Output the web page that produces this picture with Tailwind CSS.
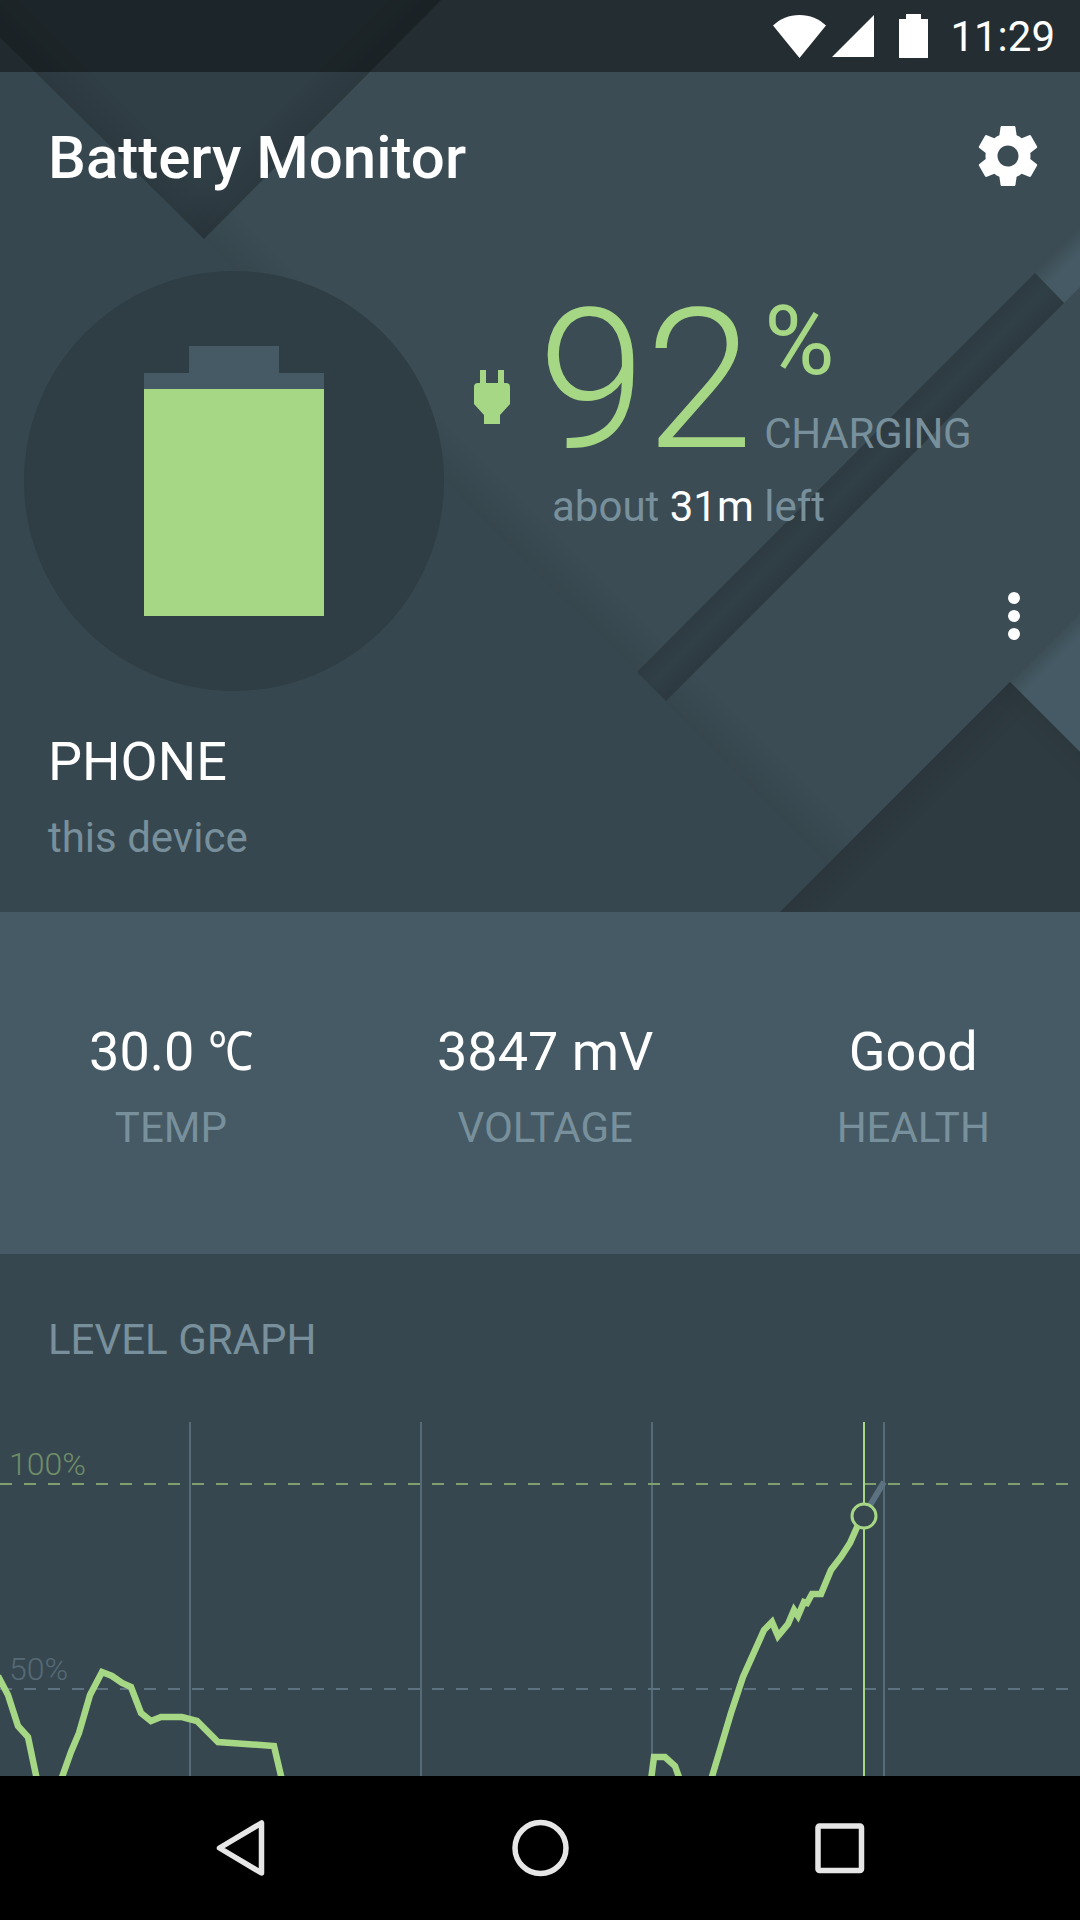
<!DOCTYPE html>
<html>
<head>
<meta charset="utf-8">
<script src="https://cdn.jsdelivr.net/npm/@tailwindcss/browser@4"></script>
</head>
<body class="m-0">
<div class="w-[1080px] h-[1920px] flex flex-col overflow-hidden bg-[#37474f] font-['Roboto',sans-serif] text-white">

  <!-- Hero -->
  <div class="relative h-[912px] flex flex-col shrink-0">
    <svg class="absolute inset-0" width="1080" height="912" viewBox="0 0 1080 912">
      <defs>
        <linearGradient id="mainShadow" gradientUnits="userSpaceOnUse" x1="420" y1="455" x2="450" y2="425"><stop offset="0" stop-color="#000" stop-opacity=".08"/><stop offset="1" stop-color="#000" stop-opacity="0"/></linearGradient>
        <linearGradient id="topL" gradientUnits="userSpaceOnUse" x1="102" y1="138" x2="132" y2="108"><stop offset="0" stop-color="#000" stop-opacity=".09"/><stop offset="1" stop-color="#000" stop-opacity="0"/></linearGradient>
        <linearGradient id="topR" gradientUnits="userSpaceOnUse" x1="322" y1="120" x2="292" y2="90"><stop offset="0" stop-color="#000" stop-opacity=".09"/><stop offset="1" stop-color="#000" stop-opacity="0"/></linearGradient>
        <linearGradient id="bandL" gradientUnits="userSpaceOnUse" x1="836" y1="472" x2="850" y2="486"><stop offset="0" stop-color="#000" stop-opacity=".05"/><stop offset="1" stop-color="#000" stop-opacity="0"/></linearGradient>
        <linearGradient id="bandR" gradientUnits="userSpaceOnUse" x1="865" y1="502" x2="850" y2="487"><stop offset="0" stop-color="#000" stop-opacity=".08"/><stop offset="1" stop-color="#000" stop-opacity="0"/></linearGradient>
        <linearGradient id="triL" gradientUnits="userSpaceOnUse" x1="895" y1="797" x2="922" y2="824"><stop offset="0" stop-color="#000" stop-opacity=".08"/><stop offset="1" stop-color="#000" stop-opacity="0"/></linearGradient>
        <linearGradient id="triR" gradientUnits="userSpaceOnUse" x1="1045" y1="717" x2="1025" y2="737"><stop offset="0" stop-color="#000" stop-opacity=".05"/><stop offset="1" stop-color="#000" stop-opacity="0"/></linearGradient>
        <linearGradient id="stripeA" gradientUnits="userSpaceOnUse" x1="1057" y1="251" x2="1069" y2="263"><stop offset="0" stop-color="#3c4d55"/><stop offset="1" stop-color="#455a64"/></linearGradient>
        <linearGradient id="stripeB" gradientUnits="userSpaceOnUse" x1="1045" y1="647" x2="1057" y2="659"><stop offset="0" stop-color="#3c4d55"/><stop offset="1" stop-color="#455a64"/></linearGradient>
      </defs>
      <rect width="1080" height="912" fill="#37474f"/>
      <polygon points="441,0 1080,0 1080,612 1010,682 828,864 204,239" fill="#3b4c54"/>
      <polygon points="204,239 828,864 870,822 246,197" fill="url(#mainShadow)"/>
      <polygon points="1035,273 1080,228 1080,287 1064,303" fill="url(#stripeA)"/>
      <polygon points="1010,682 1080,612 1080,752" fill="url(#stripeB)"/>
      <polygon points="0,0 441,0 204,239 0,37" fill="#303e45"/>
      <polygon points="0,0 441,0 204,239 0,37" fill="url(#topL)"/>
      <polygon points="0,0 441,0 204,239 0,37" fill="url(#topR)"/>
      <polygon points="637,672 1035,273 1064,303 666,701" fill="#303e45"/>
      <polygon points="637,672 1035,273 1064,303 666,701" fill="url(#bandL)"/>
      <polygon points="637,672 1035,273 1064,303 666,701" fill="url(#bandR)"/>
      <polygon points="1010,682 1080,752 1080,912 780,912" fill="#2e3b41"/>
      <polygon points="1010,682 1080,752 1080,912 780,912" fill="url(#triL)"/>
      <polygon points="1010,682 1080,752 1080,912 780,912" fill="url(#triR)"/>
    </svg>

    <!-- status bar -->
    <div class="relative h-[72px] shrink-0 bg-black/40 flex items-center justify-end pr-[25px]">
      <svg class="mr-[6px]" width="53" height="43" viewBox="0 0 53 43"><path d="M0 10.5C7 4 16 0 26.500 0S46 4 53 10.500L26.500 43z" fill="#fff"/></svg>
      <svg class="mr-[25px]" width="42" height="42" viewBox="0 0 42 42"><path d="M0 42L42 0v42z" fill="#fff"/></svg>
      <svg class="mr-[22px]" width="29" height="44" viewBox="0 0 29 44"><path d="M7 5V0h15v5h7v39H0V5z" fill="#fff"/></svg>
      <span class="text-[42px] leading-none pt-[2px]">11:29</span>
    </div>

    <!-- title -->
    <div class="relative h-[168px] shrink-0 flex items-center justify-between pl-[48px] pr-[36px]">
      <h1 class="text-[60px] leading-none font-medium pt-[3px]">Battery Monitor</h1>
      <svg width="72" height="72" viewBox="0 0 24 24"><path fill="#fff" d="M19.43 12.98c.04-.32.07-.64.07-.98s-.03-.66-.07-.98l2.11-1.65c.19-.15.24-.42.12-.64l-2-3.46c-.12-.22-.39-.3-.61-.22l-2.49 1c-.52-.4-1.08-.73-1.69-.98l-.38-2.65C14.46 2.18 14.25 2 14 2h-4c-.25 0-.46.18-.49.42l-.38 2.65c-.61.25-1.17.59-1.69.98l-2.49-1c-.23-.09-.49 0-.61.22l-2 3.46c-.13.22-.07.49.12.64l2.11 1.65c-.04.32-.07.65-.07.98s.03.66.07.98l-2.11 1.65c-.19.15-.24.42-.12.64l2 3.46c.12.22.39.3.61.22l2.49-1c.52.4 1.08.73 1.69.98l.38 2.65c.03.24.24.42.49.42h4c.25 0 .46-.18.49-.42l.38-2.65c.61-.25 1.17-.59 1.69-.98l2.49 1c.23.09.49 0 .61-.22l2-3.46c.12-.22.07-.49-.12-.64l-2.11-1.65zM12 15.5c-1.93 0-3.5-1.57-3.5-3.5s1.57-3.5 3.5-3.5 3.5 1.57 3.5 3.5-1.57 3.5-3.5 3.5z"/></svg>
    </div>

    <!-- gauge + reading -->
    <div class="relative flex mt-[31px] pl-[24px] h-[420px] shrink-0">
      <div class="w-[420px] h-[420px] rounded-full bg-[#2f3d44] flex flex-col items-center justify-center shrink-0">
        <div class="w-[90px] h-[27px] bg-[#455a64]"></div>
        <div class="w-[180px] h-[16px] bg-[#455a64]"></div>
        <div class="w-[180px] h-[227px] bg-[#a6d785]"></div>
      </div>
      <div class="flex-1 flex flex-col">
        <div class="flex items-start pl-[30px] pt-[15px] h-[191px]">
          <svg class="mt-[84px] shrink-0" width="36" height="54" viewBox="0 0 36 54"><path fill="#a6d785" d="M6 0h6v13h12V0h6v13h2q4 0 4 4V34L26 45V54H10V45L0 34V17q0-4 4-4h2z"/></svg>
          <span class="ml-[28px] text-[194px] leading-[190px] font-light text-[#a6d785]">92</span>
          <div class="flex flex-col ml-[11px]">
            <span class="text-[96px] leading-[96px] text-[#a6d785] mt-[7px]">%</span>
            <span class="text-[42px] leading-[50px] tracking-[-0.3px] text-[#78909c] mt-[20px]">CHARGING</span>
          </div>
        </div>
        <p class="ml-[108px] mt-[20px] text-[42px] leading-[50px] text-[#78909c]">about <span class="text-white">31m</span> left</p>
        <div class="flex flex-col items-end gap-[6px] pr-[60px] mt-[60px]">
          <i class="w-[12px] h-[12px] rounded-full bg-white"></i>
          <i class="w-[12px] h-[12px] rounded-full bg-white"></i>
          <i class="w-[12px] h-[12px] rounded-full bg-white"></i>
        </div>
      </div>
    </div>

    <!-- device -->
    <div class="relative pl-[48px] mt-[37px]">
      <p class="text-[54px] leading-[68px]">PHONE</p>
      <p class="text-[42px] leading-[50px] text-[#78909c] mt-[17px]">this device</p>
    </div>
  </div>

  <!-- Stats -->
  <div class="h-[342px] shrink-0 bg-[#455a64] flex justify-around items-start pt-[110px]">
    <div class="flex flex-col items-center ml-[-2px] mr-[2px]"><span class="text-[54px] leading-[60px] whitespace-nowrap">30.0 <span class="inline-block scale-x-[0.84] origin-left mr-[-9px]">℃</span></span><span class="text-[42px] leading-[50px] text-[#78909c] mt-[21px]">TEMP</span></div>
    <div class="flex flex-col items-center"><span class="text-[54px] leading-[60px]">3847 mV</span><span class="text-[42px] leading-[50px] text-[#78909c] mt-[21px]">VOLTAGE</span></div>
    <div class="flex flex-col items-center ml-[1px] mr-[-1px]"><span class="text-[54px] leading-[60px]">Good</span><span class="text-[42px] leading-[50px] text-[#78909c] mt-[21px]">HEALTH</span></div>
  </div>

  <!-- Graph -->
  <div class="h-[522px] shrink-0 bg-[#37474f] flex flex-col overflow-hidden">
    <p class="text-[42px] leading-[50px] text-[#78909c] pl-[48px] mt-[61px]">LEVEL GRAPH</p>
    <div class="relative mt-[57px] h-[354px]">
      <span class="absolute left-[9px] top-[26px] text-[32px] leading-[32px] font-light text-[#6f8e68]">100%</span>
      <span class="absolute left-[9px] top-[231px] text-[32px] leading-[32px] font-light text-[#566a76]">50%</span>
      <svg class="absolute inset-0" width="1080" height="354" viewBox="0 1422 1080 354" fill="none">
        <path d="M190 1422V1776M421 1422V1776M652 1422V1776M884 1422V1776" stroke="#566b78" stroke-width="2"/>
        <path d="M0 1484H1068" stroke="#7f9f6f" stroke-width="2" stroke-dasharray="12 12"/>
        <path d="M0 1689H1068" stroke="#5d7280" stroke-width="2" stroke-dasharray="12 12"/>
        <path d="M864 1422V1776" stroke="#a6d785" stroke-width="2"/>
        <path d="M869 1507L884 1482" stroke="#5d7280" stroke-width="6"/>
        <path stroke="#a6d785" stroke-width="6.500" d="M-2 1676L8 1695L18 1726L28 1737L37 1780M61 1780L71 1752L79 1733L90 1695L102 1672L112 1676L122 1683L131 1687L141 1713L151 1721L161 1717L182 1717L197 1721L218 1742L274 1746L282 1780"/>
        <path stroke="#a6d785" stroke-width="6.500" d="M651 1780L654 1757L665 1757L675 1766L680 1780M711 1780L731 1713L743 1677L764 1630L772 1622L778 1636L788 1624L794 1610L798 1616L804 1602L807 1603L812 1594L821 1594L831 1570L841 1557L850 1543L858 1525"/>
        <circle cx="864" cy="1516" r="12" fill="#37474f" stroke="#a6d785" stroke-width="3"/>
      </svg>
    </div>
  </div>

  <!-- Nav bar -->
  <div class="h-[144px] shrink-0 bg-black flex items-center relative">
    <svg class="absolute inset-0" width="1080" height="144" viewBox="0 1776 1080 144" fill="none" stroke="#e6e6e6" stroke-width="5.500">
      <path d="M261.500 1823V1873L219.500 1848z" stroke-linejoin="round"/>
      <circle cx="540.500" cy="1848" r="25.500"/>
      <rect x="818" y="1826" width="43.500" height="44.500" rx="1.500"/>
    </svg>
  </div>
</div>
</body>
</html>
